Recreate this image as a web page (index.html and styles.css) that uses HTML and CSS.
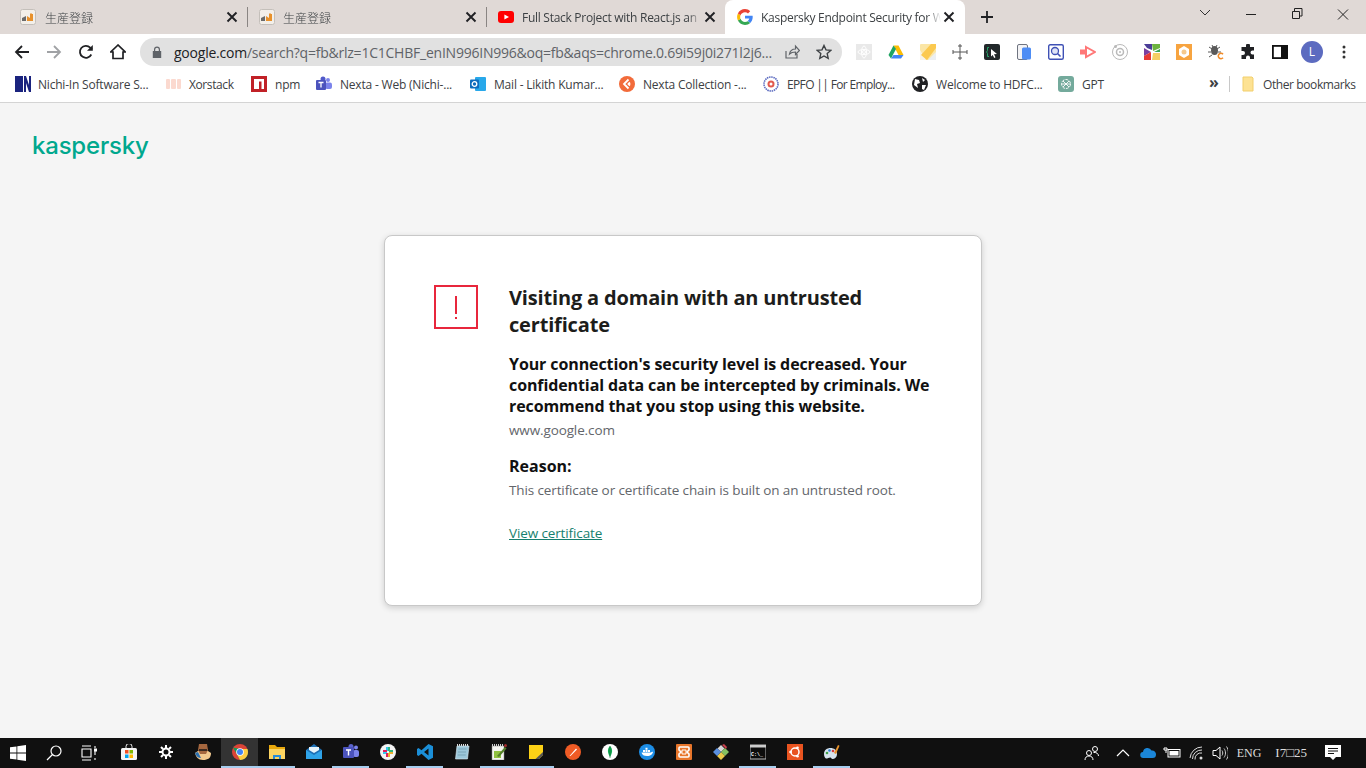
FILE: index.html
```html
<!DOCTYPE html>
<html lang="en">
<head>
  <meta charset="UTF-8" />
  <title>Kaspersky Endpoint Security for Windows</title>
  <link rel="stylesheet" href="styles.css">
</head>
<body>

<!-- Tab strip -->
<header class="tabstrip">
  <div class="tab">
    <svg class="favicon" viewBox="0 0 16 16"><rect x=".5" y=".5" width="15" height="15" rx="2" fill="#f3efe9" stroke="#c4bfba"/><path d="M2 12V9l4-2v5z" fill="#6b6b6b"/><path d="M7 12V7l3 2V5l1-1 1 1h1v7z" fill="#e8912c"/></svg>
    <span class="tab-title cjk">生産登録</span>
    <svg class="tab-close" viewBox="0 0 16 16"><path d="M3.500 3.500l9 9M12.500 3.500l-9 9" stroke="#202124" stroke-width="1.900"/></svg>
  </div>
  <div class="tab tab-sep">
    <svg class="favicon" viewBox="0 0 16 16"><rect x=".5" y=".5" width="15" height="15" rx="2" fill="#f3efe9" stroke="#c4bfba"/><path d="M2 12V9l4-2v5z" fill="#6b6b6b"/><path d="M7 12V7l3 2V5l1-1 1 1h1v7z" fill="#e8912c"/></svg>
    <span class="tab-title cjk">生産登録</span>
    <svg class="tab-close" viewBox="0 0 16 16"><path d="M3.500 3.500l9 9M12.500 3.500l-9 9" stroke="#202124" stroke-width="1.900"/></svg>
  </div>
  <div class="tab tab-sep">
    <svg class="favicon" viewBox="0 0 16 16"><rect y="2" width="16" height="12" rx="3" fill="#f00"/><path d="M6.400 5.400v5.200L11 8z" fill="#fff"/></svg>
    <span class="tab-title">Full Stack Project with React.js an</span>
    <svg class="tab-close" viewBox="0 0 16 16"><path d="M3.500 3.500l9 9M12.500 3.500l-9 9" stroke="#202124" stroke-width="1.900"/></svg>
  </div>
  <div class="tab tab-active">
    <svg class="favicon" viewBox="0 0 16 16"><path d="M15.700 8.200c0-.6 0-1-.1-1.500H8v2.900h4.300c-.2 1-.7 1.800-1.600 2.400l2.500 1.900c1.500-1.400 2.500-3.500 2.500-5.700z" fill="#4285f4"/><path d="M8 16c2.100 0 3.900-.7 5.200-1.900l-2.500-1.900c-.7.5-1.600.8-2.700.8-2.100 0-3.800-1.400-4.500-3.300L.9 11.600C2.200 14.200 4.900 16 8 16z" fill="#34a853"/><path d="M3.500 9.700c-.4-1.100-.4-2.300 0-3.400L.9 4.400c-1.100 2.200-1.100 5 0 7.200z" fill="#fbbc05"/><path d="M8 3.200c1.200 0 2.200.4 3 1.200l2.200-2.200C11.900.9 10.100 0 8 0 4.900 0 2.200 1.800.9 4.400l2.600 1.900C4.200 4.500 5.900 3.200 8 3.200z" fill="#ea4335"/></svg>
    <span class="tab-title">Kaspersky Endpoint Security for W</span>
    <svg class="tab-close" viewBox="0 0 16 16"><path d="M3.500 3.500l9 9M12.500 3.500l-9 9" stroke="#202124" stroke-width="1.900"/></svg>
  </div>
  <svg class="new-tab" viewBox="0 0 12 12"><path d="M6 0v12M0 6h12" stroke="#202124" stroke-width="1.800"/></svg>
  <div class="window-btns">
    <svg class="win-btn" viewBox="0 0 46 28"><path d="M18 10l5 5 5-5" fill="none" stroke="#333"/></svg>
    <svg class="win-btn" viewBox="0 0 46 28"><path d="M18 14.500h10" stroke="#222"/></svg>
    <svg class="win-btn" viewBox="0 0 46 28"><path d="M18.500 11.500h7v7h-7zM20.500 11v-2.500h7.500v7.500h-2.500" fill="none" stroke="#222"/></svg>
    <svg class="win-btn" viewBox="0 0 46 28"><path d="M18 9.500l10 10M28 9.500l-10 10" stroke="#222"/></svg>
  </div>
</header>

<!-- Toolbar -->
<div class="toolbar">
  <div class="nav-btns">
    <svg class="nav-icon" viewBox="0 0 16 16"><path d="M15 8H2M8 2L2 8l6 6" fill="none" stroke="#202124" stroke-width="1.800"/></svg>
    <svg class="nav-icon" viewBox="0 0 16 16"><path d="M1 8h13M8 2l6 6-6 6" fill="none" stroke="#a0a2a5" stroke-width="1.800"/></svg>
    <svg class="nav-icon" viewBox="0 0 16 16"><path d="M13.300 10.500A6 6 0 1 1 12.200 3.600L14 5.200" fill="none" stroke="#202124" stroke-width="1.800"/><path d="M14.800 1v5.800H9z" fill="#202124"/></svg>
    <svg class="nav-icon" viewBox="0 0 16 16"><path d="M8 1L.8 8H3v6.500h10V8h2.200z" fill="none" stroke="#202124" stroke-width="1.700"/></svg>
  </div>
  <div class="omnibox">
    <svg class="lock" viewBox="0 0 10 12"><path d="M2 5V3.500a3 3 0 0 1 6 0V5h1.200v7H.8V5zM3.200 5h3.600V3.500a1.800 1.800 0 0 0-3.600 0z" fill="#5f6368"/></svg>
    <span class="url"><span class="url-host">google.com</span>/search?q=fb&amp;rlz=1C1CHBF_enIN996IN996&amp;oq=fb&amp;aqs=chrome.0.69i59j0i271l2j6...</span>
    <svg class="omni-icon omni-share" viewBox="0 0 16 16"><path d="M2 7v7h11v-4M5.500 10c.5-3 3-5 6-5V2l4 4.500-4 4V8c-2.500 0-4.500.5-6 2z" fill="none" stroke="#5f6368" stroke-width="1.200"/></svg>
    <svg class="omni-icon" viewBox="0 0 16 16"><path d="M8 1.500l2 4.400 4.800.5-3.600 3.200 1 4.700L8 12l-4.200 2.300 1-4.700L1.200 6.400 6 5.900z" fill="none" stroke="#3c4043" stroke-width="1.400"/></svg>
  </div>
  <div class="extensions">
    <span class="ext"><svg viewBox="0 0 16 16"><rect width="16" height="16" fill="#e9e9e9"/><g fill="none" stroke="#fff"><circle cx="8" cy="8" r="1.500"/><ellipse cx="8" cy="8" rx="6" ry="2.500"/><ellipse cx="8" cy="8" rx="2.500" ry="6"/></g></svg></span>
    <span class="ext"><svg viewBox="0 0 16 16"><path d="M5.500 1.500h5L15.500 11h-5z" fill="#fbbc04"/><path d="M5.500 1.500L.5 11 3 14.500 8 5z" fill="#1fa463"/><path d="M3 14.500h10l2.500-3.500h-10z" fill="#4285f4"/></svg></span>
    <span class="ext"><svg viewBox="0 0 16 16"><rect width="16" height="16" rx="1" fill="#fbe6a6"/><path d="M0 16V6l6 10z" fill="#f7f3e8"/><path d="M1 11L11 0h5v4L7 16z" fill="#fbc94f"/><path d="M16 8v8H8z" fill="#eceff1"/></svg></span>
    <span class="ext"><svg viewBox="0 0 16 16"><path d="M8 0v16M1 8h14M6 2h4M6 14h4M1 6v4M15 6v4" stroke="#555" fill="none"/></svg></span>
    <span class="ext"><svg viewBox="0 0 16 16"><rect width="16" height="16" rx="2" fill="#22282a"/><path d="M5 3.500H3.500v3L2.500 8l1 1.500v3H5" fill="none" stroke="#26a269"/><path d="M7 5l6 5-3 .3 1.500 3-1.300.7-1.500-3L7 12.500z" fill="#fff"/></svg></span>
    <span class="ext"><svg viewBox="0 0 16 16"><rect x="1.500" y=".5" width="10" height="15" rx="1.500" fill="#f3f3f5" stroke="#6f7480"/><rect x="6" y="3.500" width="9" height="12" rx="1.500" fill="#4e8df5"/></svg></span>
    <span class="ext"><svg viewBox="0 0 16 16"><rect x=".7" y=".7" width="14.600" height="14.600" rx="1.500" fill="#fff" stroke="#3f51b5" stroke-width="1.400"/><circle cx="7" cy="7" r="3.500" fill="#dfe3f6" stroke="#3f51b5" stroke-width="1.300"/><path d="M9.500 9.500l3 3" stroke="#3f51b5" stroke-width="1.600"/></svg></span>
    <span class="ext"><svg viewBox="0 0 16 16"><path d="M6 3l9 5-9 5z" fill="none" stroke="#f77" stroke-width="2"/><rect x="0" y="5.500" width="6" height="5" fill="#f77"/></svg></span>
    <span class="ext"><svg viewBox="0 0 16 16"><g fill="none" stroke="#b9b9b9"><circle cx="8" cy="8" r="7.500"/><circle cx="8" cy="8" r="3.500" stroke-width="1.500"/></g><circle cx="8" cy="8" r="1" fill="#b9b9b9"/><circle cx="3.500" cy="2.500" r="1.500" fill="#b9b9b9"/></svg></span>
    <span class="ext"><svg viewBox="0 0 16 16"><rect width="16" height="16" fill="#fff"/><path d="M0 0h8v6L3 4z" fill="#4a3d97"/><path d="M0 4l7 4-7 4z" fill="#7a3fa0"/><path d="M0 16v-4l7-4v8z" fill="#e53935"/><path d="M8 0h8v4L9 7z" fill="#6cb33f"/><path d="M16 5v3H10z" fill="#3aa655"/><path d="M9 9h7v7H8z" fill="#f5cf63"/></svg></span>
    <span class="ext"><svg viewBox="0 0 16 16"><rect width="16" height="16" fill="#f7a440"/><path d="M8 2l5 3v6l-5 3-5-3V5z" fill="#fff"/><circle cx="8" cy="8" r="2.500" fill="#f5c98c"/></svg></span>
    <span class="ext"><svg viewBox="0 0 16 16"><ellipse cx="6.500" cy="6.500" rx="3.500" ry="4.500" fill="#5a5a5a"/><path d="M1 3l3 2M12 3L9 5M0 8h3M13 8h-3M1 13l3-2M4 1l1 2M9 1L8 3" stroke="#5a5a5a"/><path d="M15 10.200a2.700 2.700 0 1 0 0 3.600" fill="none" stroke="#f28c28" stroke-width="1.600"/></svg></span>
    <span class="ext"><svg viewBox="0 0 16 16"><path d="M6 1.500a2 2 0 0 1 4 0V3h4v3.500h-1.500a2 2 0 0 0 0 4H14V15H10v-1.500a2 2 0 0 0-4 0V15H1.500v-4H3a2 2 0 0 0 0-4H1.500V3H6z" fill="#202124"/></svg></span>
    <span class="ext"><svg viewBox="0 0 16 16"><rect x=".9" y="1.900" width="14.200" height="12.200" fill="none" stroke="#111" stroke-width="1.800"/><rect x="9" y="2" width="6" height="12" fill="#111"/></svg></span>
    <span class="ext"><span class="avatar">L</span></span>
    <span class="ext"><svg viewBox="0 0 16 16"><circle cx="8" cy="3" r="1.500" fill="#333"/><circle cx="8" cy="8" r="1.500" fill="#333"/><circle cx="8" cy="13" r="1.500" fill="#333"/></svg></span>
  </div>
</div>

<!-- Bookmarks -->
<nav class="bookmarks">
  <div class="bm-list">
    <span class="bm bm-close"><svg viewBox="0 0 16 16"><rect width="16" height="16" fill="#fff"/><rect width="8" height="16" fill="#1a237e"/><path d="M9 16V0h2l3 9V0h2v16h-2l-3-9v9z" fill="#1a237e"/></svg>Nichi-In Software S...</span>
    <span class="bm bm-close bm-tight"><svg viewBox="0 0 16 16"><g fill="#fbd9cf"><rect x="0" y="3" width="4" height="10" rx="1"/><rect x="5" y="3" width="5" height="10" rx="1"/><rect x="11" y="3" width="4" height="10" rx="1"/></g></svg>Xorstack</span>
    <span class="bm"><svg viewBox="0 0 16 16"><rect width="16" height="16" fill="#c12127"/><path d="M3 3h10v10h-2.500V5.500H8V13H3z" fill="#fff"/></svg>npm</span>
    <span class="bm"><svg viewBox="0 0 16 16"><circle cx="12" cy="4" r="2" fill="#7b83eb"/><rect x="9" y="6.500" width="7" height="6.500" rx="2" fill="#7b83eb"/><circle cx="7" cy="3" r="2.500" fill="#5059c9"/><rect x="0" y="4" width="10" height="10" rx="1" fill="#4b53bc"/><path d="M2.500 6.500h5M5 6.500v5" stroke="#fff" stroke-width="1.300"/></svg>Nexta - Web (Nichi-...</span>
    <span class="bm"><svg viewBox="0 0 16 16"><rect x="5" y="1" width="11" height="14" rx="1" fill="#28a8ea"/><rect x="0" y="3.500" width="9" height="9" rx="1" fill="#0f6cbd"/><circle cx="4.500" cy="8" r="2.300" fill="none" stroke="#fff" stroke-width="1.300"/></svg>Mail - Likith Kumar...</span>
    <span class="bm"><svg viewBox="0 0 16 16"><circle cx="8" cy="8" r="8" fill="#f26b3a"/><path d="M9.500 3.500L5 8l4.500 4.500M11 6.500L9.500 8l1.500 1.500" fill="none" stroke="#fff" stroke-width="1.800"/></svg>Nexta Collection -...</span>
    <span class="bm bm-narrow"><svg viewBox="0 0 16 16"><circle cx="8" cy="8" r="7" fill="#fff" stroke="#5c6bc0" stroke-width="1.600" stroke-dasharray="1.500 .7"/><circle cx="8" cy="8" r="3.500" fill="#e25a4e"/><circle cx="8" cy="8" r="1.500" fill="#fff"/></svg>EPFO || For Employ...</span>
    <span class="bm"><svg viewBox="0 0 16 16"><circle cx="8" cy="8" r="8" fill="#202124"/><path d="M3 3l4 1 1 3-3 1 1 4-4-3zM10 2l3 2-2 2zM10 9l4 0-2 5-2-1z" fill="#fff"/></svg>Welcome to HDFC...</span>
    <span class="bm"><svg viewBox="0 0 16 16"><rect width="16" height="16" rx="3" fill="#74aa9c"/><g fill="none" stroke="#fff" stroke-width=".9"><circle cx="8" cy="8" r="4.500" stroke-dasharray="3 1"/><path d="M5 5l6 6M11 5l-6 6M3.500 8h9"/></g></svg>GPT</span>
  </div>
  <span class="bm-more">»</span>
  <span class="bm-sep"></span>
  <span class="bm bm-other"><svg viewBox="0 0 16 16"><path d="M2 1h9l1 1v13H2z" fill="#fde293" stroke="#f2cf6c"/></svg>Other bookmarks</span>
</nav>

<!-- Page -->
<main class="page">
  <div class="logo">kaspersky</div>
  <section class="card">
    <div class="alert-icon"><span class="alert-bar"></span><span class="alert-dot"></span></div>
    <div class="card-body">
      <h1>Visiting a domain with an untrusted certificate</h1>
      <p class="warning">Your connection's security level is decreased. Your confidential data can be intercepted by criminals. We recommend that you stop using this website.</p>
      <p class="muted">www.google.com</p>
      <h2>Reason:</h2>
      <p class="muted">This certificate or certificate chain is built on an untrusted root.</p>
      <a class="cert-link" href="#">View certificate</a>
    </div>
  </section>
</main>

<!-- Windows taskbar -->
<footer class="taskbar">
  <div class="task-left">
    <span class="task-start"><svg viewBox="0 0 16 16"><path d="M0 2.300l6.500-.9v6.200H0zM7.300 1.300L16 0v7.600H7.300zM0 8.400h6.500v6.200L0 13.700zM7.300 8.400H16V16l-8.700-1.200z" fill="#fff"/></svg></span>
    <span class="task-search"><svg viewBox="0 0 16 16"><circle cx="10" cy="6" r="5" fill="none" stroke="#fff" stroke-width="1.200"/><path d="M6.500 9.500L1 15" stroke="#fff" stroke-width="1.200"/></svg></span>
    <span class="task-view"><svg viewBox="0 0 16 16"><path d="M1 1h9M1 15h9M1 4h9v8H1zM14 1v2M14 13v2M14 6v4" fill="none" stroke="#fff" stroke-width="1.100"/><rect x="13" y="3.500" width="3" height="3" fill="#fff"/></svg></span>
  </div>
  <div class="task-apps">
    <span class="app"><svg viewBox="0 0 16 16"><path d="M5 4V2.500a3 3 0 0 1 6 0V4" fill="none" stroke="#eee"/><rect y="4" width="16" height="12" rx="1.500" fill="#f5f5f5"/><rect x="4" y="6" width="3.500" height="3.500" fill="#f25022"/><rect x="8.500" y="6" width="3.500" height="3.500" fill="#7fba00"/><rect x="4" y="10.500" width="3.500" height="3.500" fill="#00a4ef"/><rect x="8.500" y="10.500" width="3.500" height="3.500" fill="#ffb900"/></svg></span>
    <span class="app"><svg viewBox="0 0 16 16"><g fill="none" stroke="#fff"><circle cx="8" cy="8" r="3.500" stroke-width="2"/><path d="M8 1v3M8 12v3M1 8h3M12 8h3M3 3l2 2M11 11l2 2M13 3l-2 2M5 11l-2 2" stroke-width="2"/></g></svg></span>
    <span class="app"><svg viewBox="0 0 16 16"><path d="M0 9c1 4 3 7 8 7s8-2 8-7l-3-2H3z" fill="#f2c98f"/><path d="M0 9c1 3 3 5 6 5l-3-6z" fill="#2a6fb0"/><path d="M4 0h8l1 6-2 4H5L3 6z" fill="#a5673f"/><path d="M4 5h8v2H4z" fill="#3b2a20"/></svg></span>
    <span class="app app-open app-current"><svg viewBox="0 0 16 16"><circle cx="8" cy="8" r="8" fill="#db4437"/><path d="M1 3.500L4.800 10 8 16c4.400 0 8-3.600 8-8 0-1.100-.2-2-.6-3H8z" fill="#0f9d58"/><path d="M15.400 5H8l-3.200 5L8 16c4.400 0 8-3.600 8-8 0-1.100-.2-2-.6-3z" fill="#ffcd40"/><circle cx="8" cy="8" r="3.800" fill="#fff"/><circle cx="8" cy="8" r="3" fill="#4285f4"/></svg></span>
    <span class="app app-open"><svg viewBox="0 0 16 16"><path d="M0 1h6l2 2h8v12H0z" fill="#e8a80c"/><rect y="5" width="16" height="10" fill="#fcd462"/><path d="M4 15v-4h8v4h-2v-2H6v2z" fill="#2a8bd6"/></svg></span>
    <span class="app"><svg viewBox="0 0 16 16"><path d="M0 6l8-6 8 6v9H0z" fill="#1c6fb5"/><path d="M0 6l8 5 8-5v9H0z" fill="#2fa3e8"/><path d="M3 6V3h10v3L8 9z" fill="#e6f3fb"/></svg></span>
    <span class="app app-open"><svg viewBox="0 0 16 16"><circle cx="13" cy="3.500" r="2" fill="#7b83eb"/><rect x="10" y="6" width="6" height="7" rx="2" fill="#7b83eb"/><circle cx="8" cy="2.500" r="2.500" fill="#5b62cc"/><rect x="0" y="3" width="11" height="11" rx="1" fill="#4b53bc"/><path d="M3 6h5M5.500 6v5.500" stroke="#fff" stroke-width="1.400"/></svg></span>
    <span class="app"><svg viewBox="0 0 16 16"><circle cx="8" cy="8" r="8" fill="#f4f4f4"/><path d="M7 3v4M3 9h4" stroke="#36c5f0" stroke-width="2"/><path d="M9 3v4M13 7H9" stroke="#2eb67d" stroke-width="2"/><path d="M9 13V9M13 9H9" stroke="#ecb22e" stroke-width="2"/><path d="M7 13V9M3 7h4" stroke="#e01e5a" stroke-width="2"/></svg></span>
    <span class="app app-open"><svg viewBox="0 0 16 16"><path d="M11.500 0L16 2.200v11.600L11.500 16 4.500 9.700 1.500 12 0 11V5l1.500-1 3 2.300zM11.500 4.500L7 8l4.500 3.500z" fill="#1b8fd8"/></svg></span>
    <span class="app"><svg viewBox="0 0 16 16"><path d="M3 2h12l-1.500 13H1.500z" fill="#9cc7d9" stroke="#dfeef5" stroke-width=".6"/><path d="M3 1h12" stroke="#ddd" stroke-dasharray="1 1" stroke-width="2"/><path d="M4.500 5h8M4 8h8M3.700 11h8" stroke="#6d98aa" stroke-width=".7"/></svg></span>
    <span class="app app-open"><svg viewBox="0 0 16 16"><rect x="1" y="2" width="12" height="14" fill="#f4f4f0" stroke="#888" stroke-width=".5"/><path d="M1 1h12" stroke="#ccc" stroke-width="2" stroke-dasharray="1 1"/><rect x="3" y="7" width="7" height="7" fill="#90c040"/><path d="M6 12L14 3l1.500 1.500L8 13z" fill="#55802a"/><circle cx="14.500" cy="1.500" r="1.500" fill="#a02a2a"/></svg></span>
    <span class="app app-open"><svg viewBox="0 0 16 16"><path d="M1 1h14v10l-4 4H1z" fill="#fcd116"/><path d="M15 8v3l-4 4H7.500z" fill="#555"/></svg></span>
    <span class="app"><svg viewBox="0 0 16 16"><circle cx="8" cy="8" r="8" fill="#ef5b25"/><path d="M4.500 12L11 4.500l1 1L5.500 12z" fill="#fff"/></svg></span>
    <span class="app"><svg viewBox="0 0 16 16"><circle cx="8" cy="8" r="8" fill="#fff"/><path d="M8 2c2.500 2.500 3 6 0 11-3-5-2.500-8.500 0-11z" fill="#13aa52"/><path d="M8 2v12" stroke="#0b6b33" stroke-width=".6"/></svg></span>
    <span class="app"><svg viewBox="0 0 16 16"><circle cx="8" cy="8" r="8" fill="#1d8ee6"/><path d="M2.500 8.500h9.500c.5-.8 1.500-1 2-.5-.5 2-2 4-6 4-3 0-5-1-5.500-3.500z" fill="#fff"/><path d="M4 6h2v2H4zM6.500 6h2v2h-2zM6.500 3.800h2v2h-2zM9 6h2v2H9z" fill="#fff"/></svg></span>
    <span class="app"><svg viewBox="0 0 16 16"><rect width="16" height="16" rx="1" fill="#e8762b"/><path d="M4 3h8a1 1 0 0 1 1 1v2l-2 2 2 2v2a1 1 0 0 1-1 1H4a1 1 0 0 1-1-1v-2l2-2-2-2V4a1 1 0 0 1 1-1z" fill="none" stroke="#fff" stroke-width="1.600"/><path d="M6 6h4v4H6z" fill="none" stroke="#fff"/></svg></span>
    <span class="app"><svg viewBox="0 0 16 16"><path d="M8 8l3.500-3.500L8 1 4.500 4.500z" fill="#d8d8d8"/><path d="M8 8l4-4 4 4-4 4z" fill="#84c062"/><path d="M8 8l-4 4 4 4 4-4z" fill="#e9c94b"/><path d="M8 8L4 4 0 8l4 4z" fill="#5a8fe0"/><path d="M9 1l2-1 3 3-1 2z" fill="#c9414d"/></svg></span>
    <span class="app app-open"><svg viewBox="0 0 16 16"><rect y="1" width="16" height="14" fill="#0c0c0c" stroke="#bbb"/><rect y="1" width="16" height="2.500" fill="#ccc"/><text class="cmd-text" x="1" y="11.500">C:\_</text></svg></span>
    <span class="app"><svg viewBox="0 0 16 16"><rect width="16" height="16" fill="#e95420"/><circle cx="8" cy="8" r="4" fill="none" stroke="#fff" stroke-width="1.500"/><circle cx="3.500" cy="8" r="1.300" fill="#fff"/><circle cx="10.500" cy="3.800" r="1.300" fill="#fff"/><circle cx="10.500" cy="12.200" r="1.300" fill="#fff"/></svg></span>
    <span class="app app-open"><svg viewBox="0 0 16 16"><path d="M0 10c0-4 3-6 6.500-6S13 6 13 10s-3 5-4.500 5c-1 0-1-1-2-1.500S3 15 2 14.500 0 12.500 0 10z" fill="#d6e3ee"/><circle cx="3" cy="9" r="1.300" fill="#3fa14a"/><circle cx="5.500" cy="6.500" r="1.300" fill="#2b7fd6"/><circle cx="9" cy="7" r="1.300" fill="#d63b3b"/><path d="M10 9l4-8 1.500.7L12 10z" fill="#e8932c"/></svg></span>
  </div>
  <div class="tray">
    <svg class="tray-icon tray-people" viewBox="0 0 16 16"><g fill="none" stroke="#fff"><circle cx="11" cy="4" r="2.500"/><circle cx="5" cy="8" r="2.500"/><path d="M1 15c0-2.500 1.500-4 4-4s4 1.500 4 4M9.500 7.500c2.500-.5 5 1 5 3.500"/></g></svg>
    <svg class="tray-icon tray-caret" viewBox="0 0 16 16"><path d="M2 11l6-6 6 6" fill="none" stroke="#fff" stroke-width="1.200"/></svg>
    <svg class="tray-icon tray-cloud" viewBox="0 0 16 16"><path d="M3.500 13a3 3 0 0 1-.5-6 4.500 4.500 0 0 1 8.500-1.500A3.800 3.800 0 0 1 16 9.500 3.500 3.500 0 0 1 12.500 13z" fill="#1b86d8"/></svg>
    <svg class="tray-icon tray-battery" viewBox="0 0 18 16"><path d="M1 3h3v2H1zM3 5v3" stroke="#fff" fill="none"/><rect x="5" y="4.500" width="12" height="7.500" fill="none" stroke="#fff"/><rect x="6.500" y="6" width="9" height="4.500" fill="#fff"/></svg>
    <svg class="tray-icon tray-wifi" viewBox="0 0 16 16"><g fill="none" stroke="#ddd"><path d="M1 13A12 12 0 0 1 13 2"/><path d="M3.500 14A9 9 0 0 1 13 5"/><path d="M6 14.500A6 6 0 0 1 13 8"/></g><circle cx="12" cy="13" r="1.500" fill="#ddd"/></svg>
    <svg class="tray-icon tray-volume" viewBox="0 0 16 16"><path d="M1 5.500h3L8 2v12l-4-3.500H1z" fill="none" stroke="#fff"/><path d="M10 5.500c1 1.500 1 3.500 0 5M12 3.500c2 2.500 2 6.500 0 9M14.500 1.500c2.500 3.500 2.500 9.500 0 13" fill="none" stroke="#ccc"/></svg>
    <span class="tray-text tray-lang">ENG</span>
    <span class="tray-text tray-time">I7□25</span>
    <svg class="tray-icon tray-notify" viewBox="0 0 16 16"><path d="M0 0h16v12h-5l-3 3-3-3H0z" fill="#fff"/><path d="M3 3.500h10M3 6h10M3 8.500h6" stroke="#111"/></svg>
  </div>
</footer>

</body>
</html>
```

FILE: styles.css
```css
/* General */
html, body {
  height: 100%;
}

body {
  margin: 0;
  width: 1366px;
  height: 768px;
  overflow: hidden;
  display: flex;
  flex-direction: column;
  font-family: "Open Sans", "Noto Sans", sans-serif;
  background-color: #f5f5f5;
  color: #1d1d1b;
}

svg {
  display: block;
  flex-shrink: 0;
}

/* Tab strip */
.tabstrip {
  height: 34px;
  flex-shrink: 0;
  display: flex;
  background-color: #e0d9d6;
}

.tab {
  width: 239px;
  height: 34px;
  display: flex;
  align-items: center;
  box-sizing: border-box;
  padding: 0 7px 0 12px;
  font-size: 12px;
  letter-spacing: -0.28px;
  color: #3c4043;
  position: relative;
}

.tab:first-child {
  width: 247px;
  padding-left: 20px;
}

.tab-sep::before {
  content: '';
  position: absolute;
  left: 0;
  top: 7px;
  height: 20px;
  width: 1px;
  background-color: #8a8583;
}

.tab-active {
  width: 240px;
  padding-right: 8px;
  background-color: #fff;
  border-radius: 8px 8px 0 0;
  color: #3c4043;
}

.favicon {
  width: 16px;
  height: 16px;
  margin-right: 8px;
}

.tab:first-child .favicon {
  margin-right: 9px;
}

.tab-title {
  flex: 1;
  overflow: hidden;
  white-space: nowrap;
  -webkit-mask-image: linear-gradient(to right, #000 92%, transparent);
  mask-image: linear-gradient(to right, #000 92%, transparent);
}

.cjk {
  font-family: "Noto Sans CJK JP", sans-serif;
  font-weight: 300;
  letter-spacing: 0;
}

.tab-close {
  width: 16px;
  height: 16px;
}

.new-tab {
  width: 12px;
  height: 12px;
  margin: 11px 0 0 16px;
}

.window-btns {
  margin-left: auto;
  display: flex;
  height: 28px;
}

.win-btn {
  width: 46px;
  height: 28px;
}

/* Toolbar */
.toolbar {
  height: 36px;
  flex-shrink: 0;
  display: flex;
  align-items: center;
  background-color: #fff;
}

.nav-btns {
  width: 140px;
  display: flex;
  gap: 16px;
  padding-left: 14px;
  box-sizing: border-box;
}

.nav-icon {
  width: 16px;
  height: 16px;
}

.omnibox {
  width: 702px;
  height: 28px;
  box-sizing: border-box;
  display: flex;
  align-items: center;
  padding: 0 10px 0 12px;
  border-radius: 14px;
  background-color: #e1e1e1;
}

.lock {
  width: 10px;
  height: 12px;
  margin-right: 12px;
}

.url {
  flex: 1;
  font-size: 14px;
  letter-spacing: -0.23px;
  white-space: nowrap;
  overflow: hidden;
  color: #5f6368;
}

.url-host {
  color: #202124;
}

.omni-icon {
  width: 16px;
  height: 16px;
  margin-left: 16px;
}

.omni-share {
  margin-left: 8px;
}

.extensions {
  display: flex;
  padding-left: 6px;
}

.ext {
  width: 32px;
  height: 24px;
  display: flex;
  align-items: center;
  justify-content: center;
}

.ext svg {
  width: 16px;
  height: 16px;
}

.avatar {
  width: 22px;
  height: 22px;
  border-radius: 50%;
  background-color: #5c6bc0;
  color: #fff;
  font-size: 12px;
  line-height: 22px;
  text-align: center;
}

/* Bookmarks */
.bookmarks {
  height: 33px;
  flex-shrink: 0;
  box-sizing: border-box;
  display: flex;
  align-items: center;
  padding: 0 0 4px 15px;
  background-color: #fff;
  border-bottom: 1px solid #d4d4d4;
}

.bm-list {
  display: grid;
  grid-template-columns: 151px 85px 65px 154px 149px 144px 149px 146px 60px;
  width: 1103px;
}

.bm {
  display: flex;
  align-items: center;
  gap: 8px;
  font-size: 12px;
  letter-spacing: -0.2px;
  white-space: nowrap;
  color: #3c4043;
}

.bm svg {
  width: 16px;
  height: 16px;
}

.bm-close {
  gap: 7px;
}

.bm-tight {
  letter-spacing: -0.4px;
}

.bm-narrow {
  letter-spacing: -0.65px;
}

.bm-more {
  width: 30px;
  margin-left: 91px;
  font-size: 16px;
  font-weight: 700;
  color: #3c4043;
  line-height: 16px;
  margin-top: -4px;
}

.bm-sep {
  width: 1px;
  height: 16px;
  margin-right: 11px;
  margin-left: -10px;
  background-color: #c8c8c8;
}

.bm-other {
  gap: 6px;
  letter-spacing: -0.4px;
}

/* Page */
.page {
  flex: 1;
  background-color: #f5f5f5;
  padding: 0 0 0 32px;
  min-height: 0;
}

.logo {
  height: 132px;
  box-sizing: border-box;
  padding-top: 27px;
  font-family: Inter, sans-serif;
  font-weight: 500;
  font-size: 24px;
  line-height: 32px;
  letter-spacing: -0.2px;
  color: #00a88e;
}

.card {
  width: 598px;
  height: 371px;
  margin-left: 352px;
  box-sizing: border-box;
  padding: 49px 49px 0;
  display: flex;
  gap: 31px;
  background-color: #fff;
  border: 1px solid #c8c8c8;
  border-radius: 8px;
  box-shadow: 0 2px 6px rgba(0, 0, 0, 0.16);
}

.alert-icon {
  width: 44px;
  height: 44px;
  flex-shrink: 0;
  box-sizing: border-box;
  border: 2px solid #e8263c;
  display: flex;
  flex-direction: column;
  align-items: center;
  padding-top: 9px;
  gap: 3px;
}

.alert-bar {
  width: 2px;
  height: 18px;
  background-color: #e8263c;
}

.alert-dot {
  width: 2px;
  height: 2px;
  background-color: #e8263c;
}

.card-body {
  flex: 1;
}

h1 {
  margin: -1px 0 16px;
  font-size: 20px;
  line-height: 27px;
  font-weight: 700;
  letter-spacing: -0.17px;
}

.warning {
  margin: 0 0 3px;
  font-size: 16px;
  line-height: 21px;
  font-weight: 700;
  letter-spacing: -0.1px;
  color: #111;
}

.muted {
  margin: 0;
  font-size: 13.500px;
  line-height: 20px;
  letter-spacing: -0.12px;
  color: #63666b;
}

h2 {
  margin: 16px 0 3px;
  font-size: 16px;
  line-height: 21px;
  font-weight: 700;
  color: #111;
}

.cert-link {
  display: inline-block;
  margin-top: 23px;
  font-size: 13.500px;
  line-height: 20px;
  letter-spacing: -0.12px;
  color: #177f6e;
}

/* Taskbar */
.taskbar {
  height: 30px;
  flex-shrink: 0;
  display: flex;
  background-color: #101010;
}

.task-left {
  width: 110px;
  display: flex;
  align-items: center;
}

.task-left span {
  display: flex;
  justify-content: center;
}

.task-start {
  width: 36px;
}

.task-search {
  width: 36px;
}

.task-view {
  width: 34px;
}

.task-left svg {
  width: 16px;
  height: 16px;
}

.task-apps {
  display: flex;
}

.app {
  width: 37px;
  height: 30px;
  box-sizing: border-box;
  display: flex;
  align-items: center;
  justify-content: center;
  padding-bottom: 2px;
}

.app svg {
  width: 16px;
  height: 16px;
}

.app-open {
  border-bottom: 2px solid #a6cdee;
  padding-bottom: 0;
}

.app-current {
  background-color: #333;
}

.cmd-text {
  font-family: "Liberation Mono", monospace;
  font-size: 5px;
  font-weight: 700;
  fill: #fff;
}

.tray {
  margin-left: auto;
  display: flex;
  align-items: center;
  padding-right: 25px;
}

.tray-icon {
  width: 16px;
  height: 16px;
}

.tray-caret {
  margin-left: 15px;
}

.tray-cloud {
  margin-left: 9px;
}

.tray-battery {
  width: 18px;
  margin-left: 7px;
}

.tray-wifi {
  margin-left: 8px;
}

.tray-volume {
  margin-left: 7px;
}

.tray-text {
  font-family: "Liberation Serif", serif;
  font-size: 12px;
  color: #ddd;
}

.tray-lang {
  margin-left: 9px;
}

.tray-time {
  margin-left: 14px;
  font-size: 13px;
}

.tray-notify {
  margin-left: 18px;
}
```
